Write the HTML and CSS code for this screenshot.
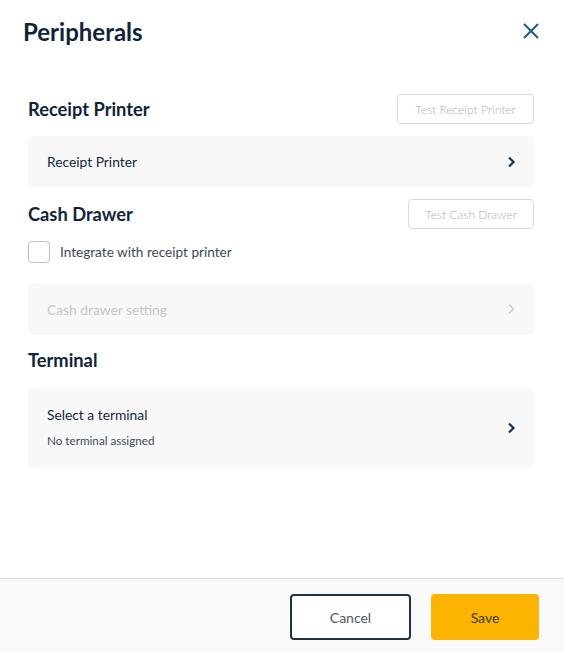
FILE: index.html
```html
<!DOCTYPE html>
<html lang="en">
<head>
  <meta charset="UTF-8">
  <meta name="viewport" content="width=device-width, initial-scale=1.0">
  <title>Peripherals</title>
  <link rel="stylesheet" href="styles.css">
</head>
<body>
  <div class="modal">
    <div class="modal-header">
      <h1>Peripherals</h1>
      <button class="close-btn" aria-label="Close">
        <svg width="18" height="18" viewBox="0 0 18 18"><path d="M2 2L16 16M16 2L2 16" stroke="#1f6072" stroke-width="2" fill="none"/></svg>
      </button>
    </div>

    <div class="modal-body">
      <div class="section-head first">
        <h2>Receipt Printer</h2>
        <button class="test-btn test-receipt">Test Receipt Printer</button>
      </div>
      <div class="row">
        <span class="row-title">Receipt Printer</span>
        <svg class="chevron" width="10" height="14" viewBox="0 0 10 14"><path d="M3 2.5L7.5 7L3 11.5" stroke="#17334a" stroke-width="2.2" fill="none"/></svg>
      </div>

      <div class="section-head">
        <h2>Cash Drawer</h2>
        <button class="test-btn test-cash">Test Cash Drawer</button>
      </div>
      <label class="check">
        <span class="box"></span>
        <span>Integrate with receipt printer</span>
      </label>
      <div class="row disabled">
        <span class="row-title">Cash drawer setting</span>
        <svg class="chevron" width="10" height="14" viewBox="0 0 10 14"><path d="M3 2.5L7.5 7L3 11.5" stroke="#c9cdd1" stroke-width="1.6" fill="none"/></svg>
      </div>

      <div class="section-head terminal">
        <h2>Terminal</h2>
      </div>
      <div class="row tall">
        <div class="row-text">
          <span class="row-title">Select a terminal</span>
          <span class="row-sub">No terminal assigned</span>
        </div>
        <svg class="chevron" width="10" height="14" viewBox="0 0 10 14"><path d="M3 2.5L7.5 7L3 11.5" stroke="#17334a" stroke-width="2.2" fill="none"/></svg>
      </div>
    </div>

    <div class="modal-footer">
      <button class="btn-cancel">Cancel</button>
      <button class="btn-save">Save</button>
    </div>
  </div>
</body>
</html>
```

FILE: styles.css
```css
* {
  box-sizing: border-box;
}

body {
  margin: 0;
  background: #ffffff;
  font-family: Lato, "Noto Sans", sans-serif;
  color: #13263a;
}

.modal {
  display: flex;
  flex-direction: column;
  height: 100vh;
}

.modal-header {
  display: flex;
  justify-content: space-between;
  align-items: center;
  height: 62px;
  padding: 0 24px 0 23px;
}

.modal-header h1 {
  margin: 0;
  font-size: 24px;
  font-weight: 700;
  color: #0f2438;
}

.close-btn {
  background: none;
  border: none;
  padding: 0;
  width: 18px;
  height: 18px;
  cursor: pointer;
}

.modal-body {
  flex: 1;
  padding: 0 30px 0 28px;
}

.section-head {
  display: flex;
  justify-content: space-between;
  align-items: center;
  height: 30px;
  margin: 12px 0 12px;
}

.section-head.first {
  margin-top: 32px;
}

.section-head.terminal {
  margin: 10px 0 13px;
}

.section-head h2 {
  margin: 0;
  font-size: 18.3px;
  font-weight: 700;
  color: #0f2438;
}

.test-btn {
  height: 30px;
  background: #ffffff;
  border: 1px solid #d8dbde;
  border-radius: 4px;
  font-family: Lato, "Noto Sans", sans-serif;
  font-size: 12px;
  font-weight: 300;
  color: #aab0b6;
  padding: 0;
}

.test-receipt {
  width: 137px;
}

.test-cash {
  width: 126px;
}

.row {
  display: flex;
  justify-content: space-between;
  align-items: center;
  height: 51px;
  padding: 0 18px 0 19px;
  background: #f8f8f8;
  border-radius: 6px;
}

.row.tall {
  height: 80px;
}

.row-title {
  font-size: 13.8px;
  color: #13263a;
}

.row.disabled {
  height: 52px;
}

.row.disabled .row-title {
  color: #c3c7cb;
}

.row-text {
  display: flex;
  flex-direction: column;
  gap: 10px;
  margin-top: -3px;
}

.row-sub {
  font-size: 11.7px;
  color: #3c4a58;
}

.check {
  display: flex;
  align-items: center;
  gap: 10px;
  margin-bottom: 20px;
  font-size: 13.6px;
  color: #3c4a58;
}

.box {
  width: 22px;
  height: 22px;
  border: 1px solid #b9bec3;
  border-radius: 4px;
  background: #ffffff;
}

.modal-footer {
  display: flex;
  justify-content: flex-end;
  gap: 20px;
  height: 74px;
  padding: 15px 25px 0 0;
  background: #f9f9f9;
  border-top: 1px solid #dedede;
}

.btn-cancel,
.btn-save {
  height: 46px;
  border-radius: 4px;
  font-family: Lato, "Noto Sans", sans-serif;
  font-size: 14px;
  cursor: pointer;
}

.btn-cancel {
  width: 121px;
  background: #ffffff;
  border: 2px solid #1c3349;
  color: #4a5866;
}

.btn-save {
  width: 108px;
  background: #fbb400;
  border: none;
  color: #3d3a2e;
}
```
